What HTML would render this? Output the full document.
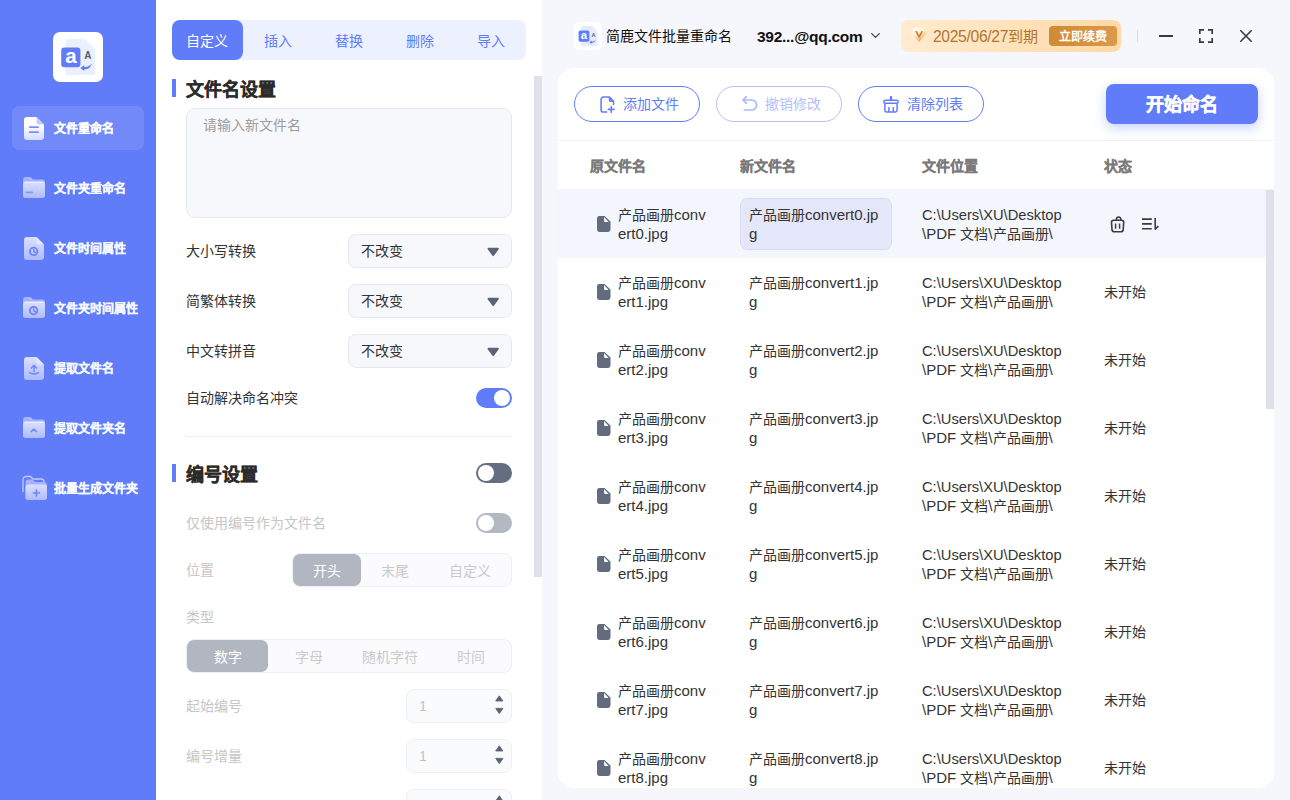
<!DOCTYPE html>
<html lang="zh-CN"><head><meta charset="utf-8"><title>batch rename</title>
<style>
*{box-sizing:border-box;margin:0;padding:0}
html,body{width:1290px;height:800px;overflow:hidden}
body{font-family:"Liberation Sans",sans-serif;font-size:14px;color:#333;background:#f6f7fc;position:relative}
.abs{position:absolute}
.l{font-size:15px}
/* sidebar */
#side{position:absolute;left:0;top:0;width:156px;height:800px;background:#617cf9}
#logo{position:absolute;left:53px;top:32px;width:50px;height:50px;background:#fff;border-radius:7px}
.mi{position:absolute;left:12px;width:132px;height:44px;border-radius:7px}
.mi.on{background:rgba(255,255,255,.11)}
.mi svg{position:absolute}
.mi span{position:absolute;left:42px;top:0;height:44px;line-height:47px;font-size:12px;font-weight:bold;color:#fff;white-space:nowrap;opacity:.95;-webkit-text-stroke:.25px #fff}
.mi.on span{opacity:1}
/* mid */
#mid{position:absolute;left:156px;top:0;width:386px;height:800px;background:#fff;overflow:hidden}
#tabs{position:absolute;left:16px;top:20px;width:354px;height:40px;background:#edf1ff;border-radius:8px;display:flex}
#tabs div{flex:1;text-align:center;line-height:42px;font-size:14px;color:#617cf9}
#tabs div.on{background:#617cf9;color:#fff;border-radius:8px}
.bar{position:absolute;left:16px;width:4px;height:18px;background:#617cf9}
.h{position:absolute;left:30px;font-size:18px;font-weight:bold;color:#2b2b2b;-webkit-text-stroke:.3px #2b2b2b;line-height:24px;white-space:nowrap}
.lab{position:absolute;left:30px;font-size:14px;line-height:20px;color:#333;white-space:nowrap}
.lab.dis{color:#c6c6c6}
.sel{position:absolute;left:192px;width:164px;height:34px;border:1px solid #e6e8f0;border-radius:8px;background:#f7f8fc}
.sel span{position:absolute;left:12px;top:0;line-height:33px;font-size:14px;color:#333}
.sel svg{position:absolute;left:137.8px;top:11.9px}
.tg{position:absolute;left:320px;width:36px;height:20px;border-radius:10px}
.tg i{position:absolute;top:2px;width:16px;height:16px;border-radius:8px;background:#fff}
.seg{position:absolute;height:34px;border:1px solid #eeeff4;border-radius:8px;background:#fbfbfd}
.seg div{position:absolute;top:0;height:32px;line-height:34px;text-align:center;font-size:14px;color:#cacaca;border-radius:7px}
.seg div.on{background:#b2b6c1;color:#fff}
.num{position:absolute;left:250px;width:106px;height:34px;border:1px solid #eeeff4;border-radius:8px;background:#fafbfd}
.num span{position:absolute;left:12px;top:0;line-height:33px;font-size:14px;color:#c2c2c2}
.num svg{position:absolute;left:88px;top:5.4px}
.sb{position:absolute;background:#dfe0e9}
/* main */
#card{position:absolute;left:558px;top:68px;width:716px;height:720px;background:#fff;border-radius:16px;overflow:hidden}
.btn{position:absolute;top:18px;width:126px;height:36px;border:1.4px solid #617cf9;border-radius:18px;color:#617cf9;font-size:14px;line-height:34px;white-space:nowrap}
.btn.dis{border-color:#b3c0fc;color:#b3c0fc}
.btn svg{position:absolute}
.btn span{position:absolute;top:0}
#go{position:absolute;left:548px;top:16px;width:152px;height:40px;border-radius:8px;background:#617cf9;color:#fff;font-size:18px;font-weight:bold;text-align:center;line-height:43px;-webkit-text-stroke:.45px #fff;box-shadow:0 4px 12px rgba(97,124,249,.35)}
.th{position:absolute;top:88px;font-size:14px;font-weight:bold;color:#7a7a7a;-webkit-text-stroke:.2px #7a7a7a;line-height:20px;white-space:nowrap}
.row{position:absolute;left:0;width:716px;height:68px}
.row.on{background:#f4f6fe}
.row .fi{position:absolute;left:39px;top:26px}
.row .c{position:absolute;top:15px;font-size:14px;color:#333;white-space:nowrap}
.row .c div{height:19px;line-height:19px}
.row .c div+div{position:relative;top:0px}
.p{font-size:14.7px;position:relative;top:1px}
.row .st{position:absolute;left:546px;top:24px;line-height:20px;font-size:14px;color:#333}
.row .nb{position:absolute;left:182px;top:8px;width:152px;height:52px;border-radius:7px}
.row.on .nb{background:#e4e7fa;border:1px solid #d9dcf3}
</style></head>
<body>
<div id="side">
<div id="logo"><svg class="abs" style="left:0;top:0" width="50" height="50" viewBox="0 0 50 50">
<path d="M14.5 7 H32 L42 17 V41 a2 2 0 0 1 -2 2 H14.5 a2 2 0 0 1 -2 -2 V9 a2 2 0 0 1 2 -2z" fill="#ebf0ff"/>
<rect x="8.2" y="15.4" width="19.2" height="19.8" rx="3" fill="#617cf9"/>
<text x="17.9" y="31" font-family="Liberation Sans" font-weight="bold" font-size="20.5" fill="#fff" text-anchor="middle">a</text>
<text x="34.9" y="27.2" font-family="Liberation Sans" font-weight="bold" font-size="10" fill="#565c73" text-anchor="middle">A</text>
<path d="M38.7 31.8 C37 34 34.6 35.1 31.3 34.9 L31.3 32.9 L27.3 36.1 L31.3 39.1 L31.3 37.3 C35.2 37.5 37.8 35.3 38.7 31.8z" fill="#617cf9"/>
</svg></div>
<svg width="0" height="0" style="position:absolute"><defs>
<linearGradient id="ga" x1="0" y1="0" x2="0" y2="1"><stop offset="0.35" stop-color="#ffffff"/><stop offset="1" stop-color="#d3daff"/></linearGradient>
<linearGradient id="gi" x1="0" y1="0" x2="0" y2="1"><stop offset="0" stop-color="#dbe0fe"/><stop offset="1" stop-color="#aebbfc"/></linearGradient>
</defs></svg>
<div class="mi on" style="top:106px"><svg style="left:12px;top:11px" width="20" height="23" viewBox="0 0 20 23"><path d="M3 0 H12.5 L20 7.5 V20 a3 3 0 0 1 -3 3 H3 a3 3 0 0 1 -3 -3 V3 a3 3 0 0 1 3 -3z" fill="url(#ga)"/><path d="M12.5 0 L20 7.5 H15 a2.5 2.5 0 0 1 -2.5 -2.5z" fill="#c3ccfd"/><rect x="5" y="9.2" width="10" height="1.9" rx=".9" fill="#7a8ffb"/><rect x="5" y="14.2" width="10" height="1.9" rx=".9" fill="#7a8ffb"/></svg><span>文件重命名</span></div>
<div class="mi" style="top:166px"><svg style="left:11px;top:11px" width="22" height="22" viewBox="0 0 22 22"><path d="M0 3 a3 3 0 0 1 3 -3 H7.5 l2.5 2.5 H19 a3 3 0 0 1 3 3 V18 a3 3 0 0 1 -3 3 H3 a3 3 0 0 1 -3 -3z" fill="#a7b4fb"/><rect x="0" y="4.6" width="22" height="16.4" rx="3" fill="url(#gi)"/><path d="M2 5.4 H20" stroke="#eef1ff" stroke-opacity=".7" stroke-width="1.2" stroke-linecap="round"/><rect x="2.6" y="14.6" width="7.6" height="1.6" rx=".8" fill="#8397fb"/></svg><span>文件夹重命名</span></div>
<div class="mi" style="top:226px"><svg style="left:12px;top:11px" width="20" height="23" viewBox="0 0 20 23"><path d="M3 0 H12.5 L20 7.5 V20 a3 3 0 0 1 -3 3 H3 a3 3 0 0 1 -3 -3 V3 a3 3 0 0 1 3 -3z" fill="url(#gi)"/><path d="M12.5 0 L20 7.5 H15 a2.5 2.5 0 0 1 -2.5 -2.5z" fill="#e3e8fe"/><circle cx="9.7" cy="14.4" r="3.7" fill="none" stroke="#6a82fa" stroke-width="1.8"/><path d="M9.7 12.4 V14.4 l1.8 1.2" fill="none" stroke="#6a82fa" stroke-width="1.4" stroke-linecap="round"/></svg><span>文件时间属性</span></div>
<div class="mi" style="top:286px"><svg style="left:11px;top:11px" width="22" height="22" viewBox="0 0 22 22"><path d="M0 3 a3 3 0 0 1 3 -3 H7.5 l2.5 2.5 H19 a3 3 0 0 1 3 3 V18 a3 3 0 0 1 -3 3 H3 a3 3 0 0 1 -3 -3z" fill="#a7b4fb"/><rect x="0" y="4.6" width="22" height="16.4" rx="3" fill="url(#gi)"/><path d="M2 5.4 H20" stroke="#eef1ff" stroke-opacity=".7" stroke-width="1.2" stroke-linecap="round"/><circle cx="10.6" cy="13.6" r="3.7" fill="none" stroke="#6a82fa" stroke-width="1.8"/><path d="M10.6 11.6 V13.6 l1.8 1.2" fill="none" stroke="#6a82fa" stroke-width="1.4" stroke-linecap="round"/></svg><span>文件夹时间属性</span></div>
<div class="mi" style="top:346px"><svg style="left:12px;top:11px" width="20" height="23" viewBox="0 0 20 23"><path d="M3 0 H12.5 L20 7.5 V20 a3 3 0 0 1 -3 3 H3 a3 3 0 0 1 -3 -3 V3 a3 3 0 0 1 3 -3z" fill="url(#gi)"/><path d="M12.5 0 L20 7.5 H15 a2.5 2.5 0 0 1 -2.5 -2.5z" fill="#e3e8fe"/><path d="M10 15 V8.6 M7.4 11 L10 8.4 L12.6 11" fill="none" stroke="#7289fa" stroke-width="1.5" stroke-linecap="round" stroke-linejoin="round"/><path d="M5.6 15.6 Q10 18.6 14.4 15.6" fill="none" stroke="#7289fa" stroke-width="1.5" stroke-linecap="round"/></svg><span>提取文件名</span></div>
<div class="mi" style="top:406px"><svg style="left:11px;top:11px" width="22" height="22" viewBox="0 0 22 22"><path d="M0 3 a3 3 0 0 1 3 -3 H7.5 l2.5 2.5 H19 a3 3 0 0 1 3 3 V18 a3 3 0 0 1 -3 3 H3 a3 3 0 0 1 -3 -3z" fill="#a7b4fb"/><rect x="0" y="4.6" width="22" height="16.4" rx="3" fill="url(#gi)"/><path d="M2 5.4 H20" stroke="#eef1ff" stroke-opacity=".7" stroke-width="1.2" stroke-linecap="round"/><path d="M8.2 14.6 L10.8 12 L13.4 14.6" fill="none" stroke="#7289fa" stroke-width="1.6" stroke-linecap="round" stroke-linejoin="round"/></svg><span>提取文件夹名</span></div>
<div class="mi" style="top:466px"><svg style="left:10px;top:9px" width="26" height="26" viewBox="0 0 26 26"><path d="M1 17 V4.5 a3 3 0 0 1 3 -3 H8.5 l2.5 2.5 H19 a3 3 0 0 1 3 3" fill="none" stroke="#c3ccfd" stroke-width="1.3"/><path d="M3.5 7.5 a3 3 0 0 1 3 -3 H10.5 l2.5 2.5 H22 a3 3 0 0 1 3 3 V22 a3 3 0 0 1 -3 3 H6.5 a3 3 0 0 1 -3 -3z" fill="#a7b4fb"/><rect x="3.5" y="9.4" width="21.5" height="15.6" rx="3" fill="url(#gi)"/><path d="M14.4 15 V21 M11.4 18 H17.4" stroke="#6e85fa" stroke-width="1.7" stroke-linecap="round"/></svg><span>批量生成文件夹</span></div>
</div>
<div id="mid">
<div id="tabs"><div class="on">自定义</div><div>插入</div><div>替换</div><div>删除</div><div>导入</div></div>
<div class="bar" style="top:79px"></div><div class="h" style="top:78px">文件名设置</div>
<div class="abs" style="left:30px;top:108px;width:326px;height:110px;border:1px solid #e6e8f0;border-radius:9px;background:#f7f8fc"><span class="abs" style="left:16px;top:6px;line-height:20px;font-size:14px;color:#9d9d9d">请输入新文件名</span></div>
<div class="lab" style="top:241px">大小写转换</div><div class="sel" style="top:234px"><span>不改变</span><svg width="12.4" height="10" viewBox="0 0 14 11"><path d="M1.6 0.8 H12.4 a1 1 0 0 1 .8 1.6 L7.8 9.8 a1 1 0 0 1 -1.6 0 L0.8 2.4 a1 1 0 0 1 .8 -1.6z" fill="#5a6377"/></svg></div>
<div class="lab" style="top:291px">简繁体转换</div><div class="sel" style="top:284px"><span>不改变</span><svg width="12.4" height="10" viewBox="0 0 14 11"><path d="M1.6 0.8 H12.4 a1 1 0 0 1 .8 1.6 L7.8 9.8 a1 1 0 0 1 -1.6 0 L0.8 2.4 a1 1 0 0 1 .8 -1.6z" fill="#5a6377"/></svg></div>
<div class="lab" style="top:341px">中文转拼音</div><div class="sel" style="top:334px"><span>不改变</span><svg width="12.4" height="10" viewBox="0 0 14 11"><path d="M1.6 0.8 H12.4 a1 1 0 0 1 .8 1.6 L7.8 9.8 a1 1 0 0 1 -1.6 0 L0.8 2.4 a1 1 0 0 1 .8 -1.6z" fill="#5a6377"/></svg></div>
<div class="lab" style="top:388px">自动解决命名冲突</div><div class="tg" style="top:388px;background:#617cf9"><i style="left:18px"></i></div>
<div class="abs" style="left:30px;top:436px;width:326px;height:1px;background:#eeeeee"></div>
<div class="bar" style="top:464px"></div><div class="h" style="top:463px">编号设置</div><div class="tg" style="top:463px;background:#656d80"><i style="left:2px"></i></div>
<div class="lab dis" style="top:513px">仅使用编号作为文件名</div><div class="tg" style="top:513px;background:#b4b8c3"><i style="left:2px"></i></div>
<div class="lab dis" style="top:560px">位置</div>
<div class="seg" style="left:136px;top:553px;width:220px"><div class="on" style="left:0;width:68px">开头</div><div style="left:68px;width:68px">末尾</div><div style="left:136px;width:82px">自定义</div></div>
<div class="lab dis" style="top:607px">类型</div>
<div class="seg" style="left:30px;top:639px;width:326px"><div class="on" style="left:0;width:81px">数字</div><div style="left:81px;width:81px">字母</div><div style="left:162px;width:81px">随机字符</div><div style="left:243px;width:81px">时间</div></div>
<div class="lab dis" style="top:696px">起始编号</div><div class="num" style="top:689px"><span>1</span><svg width="8.6" height="19.4" viewBox="0 0 8.6 19.4"><path d="M4.3 0.8 L7.9 6 H0.7z" fill="#5a6377" stroke="#5a6377" stroke-width=".9" stroke-linejoin="round"/><path d="M4.3 18.6 L7.9 13.4 H0.7z" fill="#5a6377" stroke="#5a6377" stroke-width=".9" stroke-linejoin="round"/></svg></div>
<div class="lab dis" style="top:746px">编号增量</div><div class="num" style="top:739px"><span>1</span><svg width="8.6" height="19.4" viewBox="0 0 8.6 19.4"><path d="M4.3 0.8 L7.9 6 H0.7z" fill="#5a6377" stroke="#5a6377" stroke-width=".9" stroke-linejoin="round"/><path d="M4.3 18.6 L7.9 13.4 H0.7z" fill="#5a6377" stroke="#5a6377" stroke-width=".9" stroke-linejoin="round"/></svg></div>
<div class="num" style="top:789px"><span>1</span><svg width="8.6" height="19.4" viewBox="0 0 8.6 19.4"><path d="M4.3 0.8 L7.9 6 H0.7z" fill="#5a6377" stroke="#5a6377" stroke-width=".9" stroke-linejoin="round"/><path d="M4.3 18.6 L7.9 13.4 H0.7z" fill="#5a6377" stroke="#5a6377" stroke-width=".9" stroke-linejoin="round"/></svg></div>
<div class="sb" style="left:378px;top:76px;width:8px;height:501px"></div>
</div>
<div class="abs" style="left:574px;top:22px;width:28px;height:28px;background:#fff;border-radius:5px"><svg class="abs" style="left:0;top:0" width="28" height="28" viewBox="0 0 50 50"><path d="M14.5 7 H32 L42 17 V41 a2 2 0 0 1 -2 2 H14.5 a2 2 0 0 1 -2 -2 V9 a2 2 0 0 1 2 -2z" fill="#e6ecff"/><rect x="8.2" y="15.4" width="19.2" height="19.8" rx="3" fill="#617cf9"/><text x="17.9" y="31" font-family="Liberation Sans" font-weight="bold" font-size="20.5" fill="#fff" text-anchor="middle">a</text><text x="34.9" y="27.2" font-family="Liberation Sans" font-weight="bold" font-size="10" fill="#565c73" text-anchor="middle">A</text><path d="M38.7 31.8 C37 34 34.6 35.1 31.3 34.9 L31.3 32.9 L27.3 36.1 L31.3 39.1 L31.3 37.3 C35.2 37.5 37.8 35.3 38.7 31.8z" fill="#617cf9"/></svg></div>
<div class="abs" style="left:606px;top:26px;line-height:20px;font-size:14px;color:#111;white-space:nowrap">简鹿文件批量重命名</div>
<div class="abs" style="left:757px;top:27px;line-height:20px;font-size:15.5px;letter-spacing:-.27px;font-weight:bold;color:#111;white-space:nowrap">392...@qq.com</div>
<svg class="abs" style="left:870px;top:32px" width="11" height="8" viewBox="0 0 11 8"><path d="M1.7 1.6 L5.5 5.4 L9.3 1.6" fill="none" stroke="#444" stroke-width="1.3" stroke-linecap="round" stroke-linejoin="round"/></svg>
<div class="abs" style="left:901px;top:20px;width:220px;height:32px;border-radius:8px;background:linear-gradient(90deg,#ffebd0,#ffd9a6)"><svg class="abs" style="left:8.6px;top:7.4px" width="17.6" height="15.4" viewBox="0 0 17 15"><defs><linearGradient id="dg" x1="0.1" y1="0" x2="0.7" y2="1"><stop offset="0" stop-color="#ffffff"/><stop offset=".5" stop-color="#fdebc8"/><stop offset="1" stop-color="#f0a033"/></linearGradient></defs><path d="M4.6 0.8 H12 a1 1 0 0 1 .8 .4 L16 5.2 a.8 .8 0 0 1 0 1 L9.4 13.9 a.8 .8 0 0 1 -1.2 0 L1 6.2 a.8 .8 0 0 1 0 -1 L3.8 1.2 a1 1 0 0 1 .8 -.4z" fill="url(#dg)"/><path d="M6 4.6 L8.8 9.6 L11.5 4.7" fill="none" stroke="#ba8242" stroke-width="1.6" stroke-linecap="round" stroke-linejoin="round"/></svg><span class="abs" style="left:32px;top:6.5px;line-height:20px;font-size:15px;color:#b0762f;white-space:nowrap"><span style="font-size:15.6px;letter-spacing:-.3px">2025/06/27</span>到期</span><span class="abs" style="left:148px;top:6px;width:68px;height:20px;border-radius:4px;background:linear-gradient(90deg,#d08a36,#dc994a);color:#fff;font-size:12px;font-weight:bold;text-align:center;line-height:23px">立即续费</span></div>
<div class="abs" style="left:1137px;top:30px;width:1px;height:12px;background:#dcdcdc"></div>
<div class="abs" style="left:1159px;top:35px;width:14px;height:2px;background:#3a3a3a"></div>
<svg class="abs" style="left:1198px;top:28px" width="16" height="16" viewBox="0 0 16 16"><path d="M1.8 6 V1.8 H6 M10 1.8 H14.2 V6 M14.2 10 V14.2 H10 M6 14.2 H1.8 V10" fill="none" stroke="#3a3a3a" stroke-width="1.7"/></svg>
<svg class="abs" style="left:1239px;top:29px" width="14" height="14" viewBox="0 0 14 14"><path d="M1.8 1.8 L12.2 12.2 M12.2 1.8 L1.8 12.2" fill="none" stroke="#3a3a3a" stroke-width="1.6" stroke-linecap="round"/></svg>
<div id="card">
<div class="btn" style="left:16px"><svg style="left:25px;top:8.7px" width="15.4" height="17.2" viewBox="0 0 17 19"><path d="M15 9.4 V6 L10.4 1.2 H3.6 a2.4 2.4 0 0 0 -2.4 2.4 V15.4 a2.4 2.4 0 0 0 2.4 2.4 H7.4" fill="none" stroke="#617cf9" stroke-width="1.7" stroke-linecap="round" stroke-linejoin="round"/><path d="M10.4 1.6 V4.6 a1.4 1.4 0 0 0 1.4 1.4 H14.8z" fill="#617cf9" fill-opacity=".55" stroke="#617cf9" stroke-width="1.4" stroke-linejoin="round"/><path d="M12.4 11.6 V18 M9.2 14.8 H15.6" stroke="#617cf9" stroke-width="1.7" stroke-linecap="round"/></svg><span style="left:48px">添加文件</span></div>
<div class="btn dis" style="left:158px"><svg style="left:24px;top:8px" width="18" height="18" viewBox="0 0 18 18"><path d="M5.2 1.6 L2 5 L5.4 8.2" fill="none" stroke="#a9b7fb" stroke-width="1.7" stroke-linecap="round" stroke-linejoin="round"/><path d="M2.4 5 H10.6 a5 5 0 0 1 0 10 H3.4" fill="none" stroke="#a9b7fb" stroke-width="1.7" stroke-linecap="round"/></svg><span style="left:48px">撤销修改</span></div>
<div class="btn" style="left:300px"><svg style="left:24px;top:9px" width="16" height="17" viewBox="0 0 16 17"><path d="M8 1.1 V4" stroke="#617cf9" stroke-width="2.3" stroke-linecap="round"/><rect x="0.8" y="4.3" width="14.4" height="3" rx="1.5" fill="none" stroke="#617cf9" stroke-width="1.5"/><path d="M1.9 7.6 V14.2 a1.7 1.7 0 0 0 1.7 1.7 H12.4 a1.7 1.7 0 0 0 1.7 -1.7 V7.6 M5.9 11 V16 M10.3 11 V16" fill="none" stroke="#617cf9" stroke-width="1.5"/></svg><span style="left:48px">清除列表</span></div>
<div id="go">开始命名</div>
<div class="abs" style="left:0;top:72px;width:716px;height:1px;background:#f1f1f3"></div>
<div class="th" style="left:32px">原文件名</div>
<div class="th" style="left:182px">新文件名</div>
<div class="th" style="left:364px">文件位置</div>
<div class="th" style="left:546px">状态</div>
<div class="abs" style="left:0;top:121px;width:716px;height:1px;background:#f4f4f6"></div>
<div class="row on" style="top:122px">
<svg class="fi" width="13.5" height="16" viewBox="0 0 13.5 16"><path d="M2.4 0 H7.6 L13.5 5.6 V13.6 a2.4 2.4 0 0 1 -2.4 2.4 H2.4 a2.4 2.4 0 0 1 -2.4 -2.4 V2.4 a2.4 2.4 0 0 1 2.4 -2.4z" fill="#636b7e"/><path d="M7.1 1.1 V5.1 a.9 .9 0 0 0 .9 .9 H11.7z" fill="#fff"/></svg>
<div class="c" style="left:60px"><div>产品画册<span class="l">conv</span></div><div><span class="l">ert0.jpg</span></div></div>
<div class="nb"></div><div class="c" style="left:191px"><div>产品画册<span class="l">convert0.jp</span></div><div><span class="l">g</span></div></div>
<div class="c" style="left:364px"><div><span class="p">C:\Users\XU\Desktop</span></div><div><span class="l">\PDF </span>文档<span class="l">\</span>产品画册<span class="l">\</span></div></div>
<svg class="abs" style="left:551px;top:25px" width="17" height="19" viewBox="0 0 17 19"><path d="M7.3 5 a2.3 3 0 0 1 4.6 0" fill="none" stroke="#3d3d3d" stroke-width="1.5"/><path d="M4.5 5.2 H12.7 a2 2 0 0 1 2 2.2 L14.2 14.6 a2.4 2.4 0 0 1 -2.4 2.2 H5.4 a2.4 2.4 0 0 1 -2.4 -2.2 L2.5 7.4 a2 2 0 0 1 2 -2.2z" fill="none" stroke="#3d3d3d" stroke-width="1.6"/><path d="M6.6 8.4 V13.8 M10.6 8.4 V13.8" stroke="#3d3d3d" stroke-width="1.5"/></svg>
<svg class="abs" style="left:583px;top:26px" width="19" height="16" viewBox="0 0 19 16"><path d="M1 3.1 H10.8 M1 7.9 H10.8 M1 12.7 H10.8" stroke="#3d3d3d" stroke-width="1.6"/><path d="M14.2 2 V13.2 L17.4 10.2" fill="none" stroke="#3d3d3d" stroke-width="1.6" stroke-linejoin="round"/></svg>
</div>
<div class="row" style="top:190px">
<svg class="fi" width="13.5" height="16" viewBox="0 0 13.5 16"><path d="M2.4 0 H7.6 L13.5 5.6 V13.6 a2.4 2.4 0 0 1 -2.4 2.4 H2.4 a2.4 2.4 0 0 1 -2.4 -2.4 V2.4 a2.4 2.4 0 0 1 2.4 -2.4z" fill="#636b7e"/><path d="M7.1 1.1 V5.1 a.9 .9 0 0 0 .9 .9 H11.7z" fill="#fff"/></svg>
<div class="c" style="left:60px"><div>产品画册<span class="l">conv</span></div><div><span class="l">ert1.jpg</span></div></div>
<div class="nb"></div><div class="c" style="left:191px"><div>产品画册<span class="l">convert1.jp</span></div><div><span class="l">g</span></div></div>
<div class="c" style="left:364px"><div><span class="p">C:\Users\XU\Desktop</span></div><div><span class="l">\PDF </span>文档<span class="l">\</span>产品画册<span class="l">\</span></div></div>
<div class="st">未开始</div>
</div>
<div class="row" style="top:258px">
<svg class="fi" width="13.5" height="16" viewBox="0 0 13.5 16"><path d="M2.4 0 H7.6 L13.5 5.6 V13.6 a2.4 2.4 0 0 1 -2.4 2.4 H2.4 a2.4 2.4 0 0 1 -2.4 -2.4 V2.4 a2.4 2.4 0 0 1 2.4 -2.4z" fill="#636b7e"/><path d="M7.1 1.1 V5.1 a.9 .9 0 0 0 .9 .9 H11.7z" fill="#fff"/></svg>
<div class="c" style="left:60px"><div>产品画册<span class="l">conv</span></div><div><span class="l">ert2.jpg</span></div></div>
<div class="nb"></div><div class="c" style="left:191px"><div>产品画册<span class="l">convert2.jp</span></div><div><span class="l">g</span></div></div>
<div class="c" style="left:364px"><div><span class="p">C:\Users\XU\Desktop</span></div><div><span class="l">\PDF </span>文档<span class="l">\</span>产品画册<span class="l">\</span></div></div>
<div class="st">未开始</div>
</div>
<div class="row" style="top:326px">
<svg class="fi" width="13.5" height="16" viewBox="0 0 13.5 16"><path d="M2.4 0 H7.6 L13.5 5.6 V13.6 a2.4 2.4 0 0 1 -2.4 2.4 H2.4 a2.4 2.4 0 0 1 -2.4 -2.4 V2.4 a2.4 2.4 0 0 1 2.4 -2.4z" fill="#636b7e"/><path d="M7.1 1.1 V5.1 a.9 .9 0 0 0 .9 .9 H11.7z" fill="#fff"/></svg>
<div class="c" style="left:60px"><div>产品画册<span class="l">conv</span></div><div><span class="l">ert3.jpg</span></div></div>
<div class="nb"></div><div class="c" style="left:191px"><div>产品画册<span class="l">convert3.jp</span></div><div><span class="l">g</span></div></div>
<div class="c" style="left:364px"><div><span class="p">C:\Users\XU\Desktop</span></div><div><span class="l">\PDF </span>文档<span class="l">\</span>产品画册<span class="l">\</span></div></div>
<div class="st">未开始</div>
</div>
<div class="row" style="top:394px">
<svg class="fi" width="13.5" height="16" viewBox="0 0 13.5 16"><path d="M2.4 0 H7.6 L13.5 5.6 V13.6 a2.4 2.4 0 0 1 -2.4 2.4 H2.4 a2.4 2.4 0 0 1 -2.4 -2.4 V2.4 a2.4 2.4 0 0 1 2.4 -2.4z" fill="#636b7e"/><path d="M7.1 1.1 V5.1 a.9 .9 0 0 0 .9 .9 H11.7z" fill="#fff"/></svg>
<div class="c" style="left:60px"><div>产品画册<span class="l">conv</span></div><div><span class="l">ert4.jpg</span></div></div>
<div class="nb"></div><div class="c" style="left:191px"><div>产品画册<span class="l">convert4.jp</span></div><div><span class="l">g</span></div></div>
<div class="c" style="left:364px"><div><span class="p">C:\Users\XU\Desktop</span></div><div><span class="l">\PDF </span>文档<span class="l">\</span>产品画册<span class="l">\</span></div></div>
<div class="st">未开始</div>
</div>
<div class="row" style="top:462px">
<svg class="fi" width="13.5" height="16" viewBox="0 0 13.5 16"><path d="M2.4 0 H7.6 L13.5 5.6 V13.6 a2.4 2.4 0 0 1 -2.4 2.4 H2.4 a2.4 2.4 0 0 1 -2.4 -2.4 V2.4 a2.4 2.4 0 0 1 2.4 -2.4z" fill="#636b7e"/><path d="M7.1 1.1 V5.1 a.9 .9 0 0 0 .9 .9 H11.7z" fill="#fff"/></svg>
<div class="c" style="left:60px"><div>产品画册<span class="l">conv</span></div><div><span class="l">ert5.jpg</span></div></div>
<div class="nb"></div><div class="c" style="left:191px"><div>产品画册<span class="l">convert5.jp</span></div><div><span class="l">g</span></div></div>
<div class="c" style="left:364px"><div><span class="p">C:\Users\XU\Desktop</span></div><div><span class="l">\PDF </span>文档<span class="l">\</span>产品画册<span class="l">\</span></div></div>
<div class="st">未开始</div>
</div>
<div class="row" style="top:530px">
<svg class="fi" width="13.5" height="16" viewBox="0 0 13.5 16"><path d="M2.4 0 H7.6 L13.5 5.6 V13.6 a2.4 2.4 0 0 1 -2.4 2.4 H2.4 a2.4 2.4 0 0 1 -2.4 -2.4 V2.4 a2.4 2.4 0 0 1 2.4 -2.4z" fill="#636b7e"/><path d="M7.1 1.1 V5.1 a.9 .9 0 0 0 .9 .9 H11.7z" fill="#fff"/></svg>
<div class="c" style="left:60px"><div>产品画册<span class="l">conv</span></div><div><span class="l">ert6.jpg</span></div></div>
<div class="nb"></div><div class="c" style="left:191px"><div>产品画册<span class="l">convert6.jp</span></div><div><span class="l">g</span></div></div>
<div class="c" style="left:364px"><div><span class="p">C:\Users\XU\Desktop</span></div><div><span class="l">\PDF </span>文档<span class="l">\</span>产品画册<span class="l">\</span></div></div>
<div class="st">未开始</div>
</div>
<div class="row" style="top:598px">
<svg class="fi" width="13.5" height="16" viewBox="0 0 13.5 16"><path d="M2.4 0 H7.6 L13.5 5.6 V13.6 a2.4 2.4 0 0 1 -2.4 2.4 H2.4 a2.4 2.4 0 0 1 -2.4 -2.4 V2.4 a2.4 2.4 0 0 1 2.4 -2.4z" fill="#636b7e"/><path d="M7.1 1.1 V5.1 a.9 .9 0 0 0 .9 .9 H11.7z" fill="#fff"/></svg>
<div class="c" style="left:60px"><div>产品画册<span class="l">conv</span></div><div><span class="l">ert7.jpg</span></div></div>
<div class="nb"></div><div class="c" style="left:191px"><div>产品画册<span class="l">convert7.jp</span></div><div><span class="l">g</span></div></div>
<div class="c" style="left:364px"><div><span class="p">C:\Users\XU\Desktop</span></div><div><span class="l">\PDF </span>文档<span class="l">\</span>产品画册<span class="l">\</span></div></div>
<div class="st">未开始</div>
</div>
<div class="row" style="top:666px">
<svg class="fi" width="13.5" height="16" viewBox="0 0 13.5 16"><path d="M2.4 0 H7.6 L13.5 5.6 V13.6 a2.4 2.4 0 0 1 -2.4 2.4 H2.4 a2.4 2.4 0 0 1 -2.4 -2.4 V2.4 a2.4 2.4 0 0 1 2.4 -2.4z" fill="#636b7e"/><path d="M7.1 1.1 V5.1 a.9 .9 0 0 0 .9 .9 H11.7z" fill="#fff"/></svg>
<div class="c" style="left:60px"><div>产品画册<span class="l">conv</span></div><div><span class="l">ert8.jpg</span></div></div>
<div class="nb"></div><div class="c" style="left:191px"><div>产品画册<span class="l">convert8.jp</span></div><div><span class="l">g</span></div></div>
<div class="c" style="left:364px"><div><span class="p">C:\Users\XU\Desktop</span></div><div><span class="l">\PDF </span>文档<span class="l">\</span>产品画册<span class="l">\</span></div></div>
<div class="st">未开始</div>
</div>
<div class="sb" style="left:708px;top:122px;width:8px;height:219px"></div>
</div>
</body></html>
